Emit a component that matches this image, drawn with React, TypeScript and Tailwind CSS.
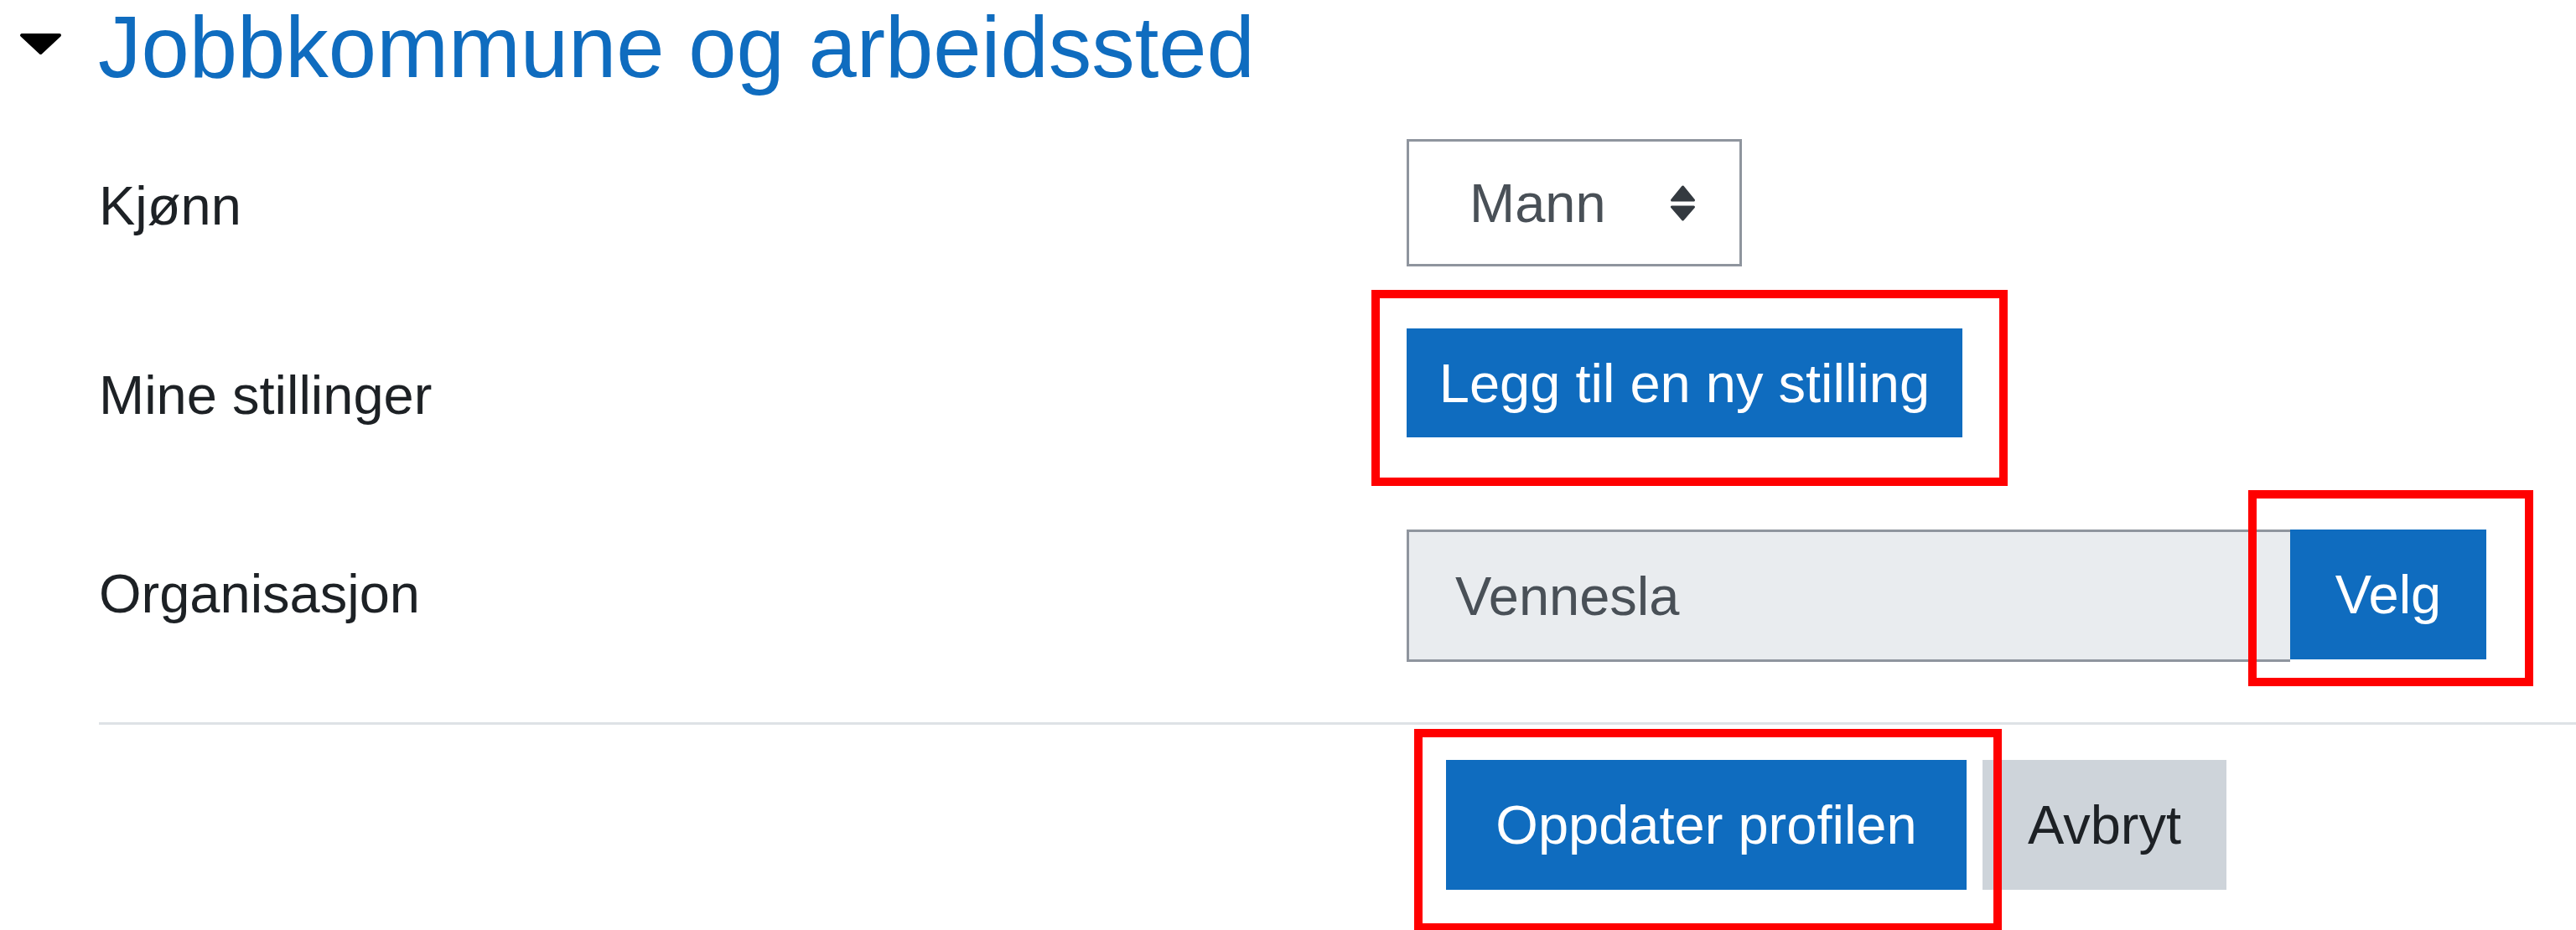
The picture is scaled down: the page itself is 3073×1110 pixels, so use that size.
import type { ReactNode } from "react";

// ---------------------------------------------------------------------------
// Small pieces
// ---------------------------------------------------------------------------

/** Red annotation frame drawn over a control. Offsets are in px. */
function Marker({ className }: { className: string }) {
  return (
    <span
      aria-hidden
      className={`pointer-events-none absolute border-[10px] border-[#ff0000] ${className}`}
    />
  );
}

function Label({ children, pad }: { children: ReactNode; pad: string }) {
  return (
    <div className={`text-[65px] leading-none text-[#1d2125] ${pad}`}>{children}</div>
  );
}

function SortArrows() {
  return (
    <svg width="31" height="43" viewBox="0 0 31 43" aria-hidden>
      <path
        d="M15.5 2 L28.5 18 L2.5 18 Z"
        fill="#343a40"
        stroke="#343a40"
        strokeWidth="3"
        strokeLinejoin="round"
      />
      <path
        d="M2.5 26 L28.5 26 L15.5 41 Z"
        fill="#343a40"
        stroke="#343a40"
        strokeWidth="3"
        strokeLinejoin="round"
      />
    </svg>
  );
}

// ---------------------------------------------------------------------------
// Page
// ---------------------------------------------------------------------------

export default function App() {
  return (
    <div className="relative h-[1110px] w-[3073px] overflow-hidden bg-white font-['Liberation_Sans',Arial,sans-serif]">
      {/* Section heading */}
      <div className="flex items-start">
        <svg
          className="ml-[23px] mt-[39px] shrink-0"
          width="51"
          height="27"
          viewBox="0 0 51 27"
          aria-hidden
        >
          <path
            d="M3 3 L48 3 L25.5 24 Z"
            fill="#000"
            stroke="#000"
            strokeWidth="4"
            strokeLinejoin="round"
          />
        </svg>
        <h3 className="ml-[43px] mt-[5px] text-[103px] font-normal leading-none text-[#0f6cbf]">
          Jobbkommune og arbeidssted
        </h3>
      </div>

      {/* Form rows */}
      <div className="mt-[58px] grid grid-cols-[1560px_1fr] pl-[118px]">
        {/* Kjønn */}
        <Label pad="pt-[47px]">Kjønn</Label>
        <div className="flex">
          <div className="flex h-[152px] w-[400px] items-center justify-between border-[3px] border-[#8f959e] bg-white pl-[72px] pr-[52px]">
            <span className="text-[65px] leading-none text-[#495057]">Mann</span>
            <SortArrows />
          </div>
        </div>

        {/* Mine stillinger */}
        <Label pad="mt-[74px] pt-[47px]">Mine stillinger</Label>
        <div className="mt-[74px] flex">
          <div className="relative">
            <button className="flex h-[130px] w-[663px] items-center justify-center bg-[#0f6cbf] text-[65px] leading-none text-white">
              Legg til en ny stilling
            </button>
            <Marker className="-bottom-[58px] -left-[42px] -right-[54px] -top-[46px]" />
          </div>
        </div>

        {/* Organisasjon */}
        <Label pad="mt-[110px] pt-[44px]">Organisasjon</Label>
        <div className="mt-[110px] flex items-start">
          <div className="flex h-[158px] w-[1054px] items-center border-y-[3px] border-l-[3px] border-[#8f959e] bg-[#e9ecef] pl-[55px]">
            <span className="text-[65px] leading-none text-[#495057]">Vennesla</span>
          </div>
          <div className="relative">
            <button className="flex h-[155px] w-[234px] items-center justify-center bg-[#0f6cbf] text-[65px] leading-none text-white">
              Velg
            </button>
            <Marker className="-bottom-[32px] -left-[50px] -right-[56px] -top-[47px]" />
          </div>
        </div>
      </div>

      {/* Divider */}
      <div className="ml-[118px] mt-[72px] h-[3px] bg-[#dee2e6]" />

      {/* Footer buttons */}
      <div className="mt-[42px] flex gap-[19px] pl-[1725px]">
        <div className="relative">
          <button className="flex h-[155px] w-[621px] items-center justify-center bg-[#0f6cbf] text-[65px] leading-none text-white">
            Oppdater profilen
          </button>
          <Marker className="-bottom-[50px] -left-[38px] -right-[42px] -top-[37px]" />
        </div>
        <button className="flex h-[155px] w-[291px] items-center justify-center bg-[#ced4da] text-[65px] leading-none text-[#1d2125]">
          Avbryt
        </button>
      </div>
    </div>
  );
}
